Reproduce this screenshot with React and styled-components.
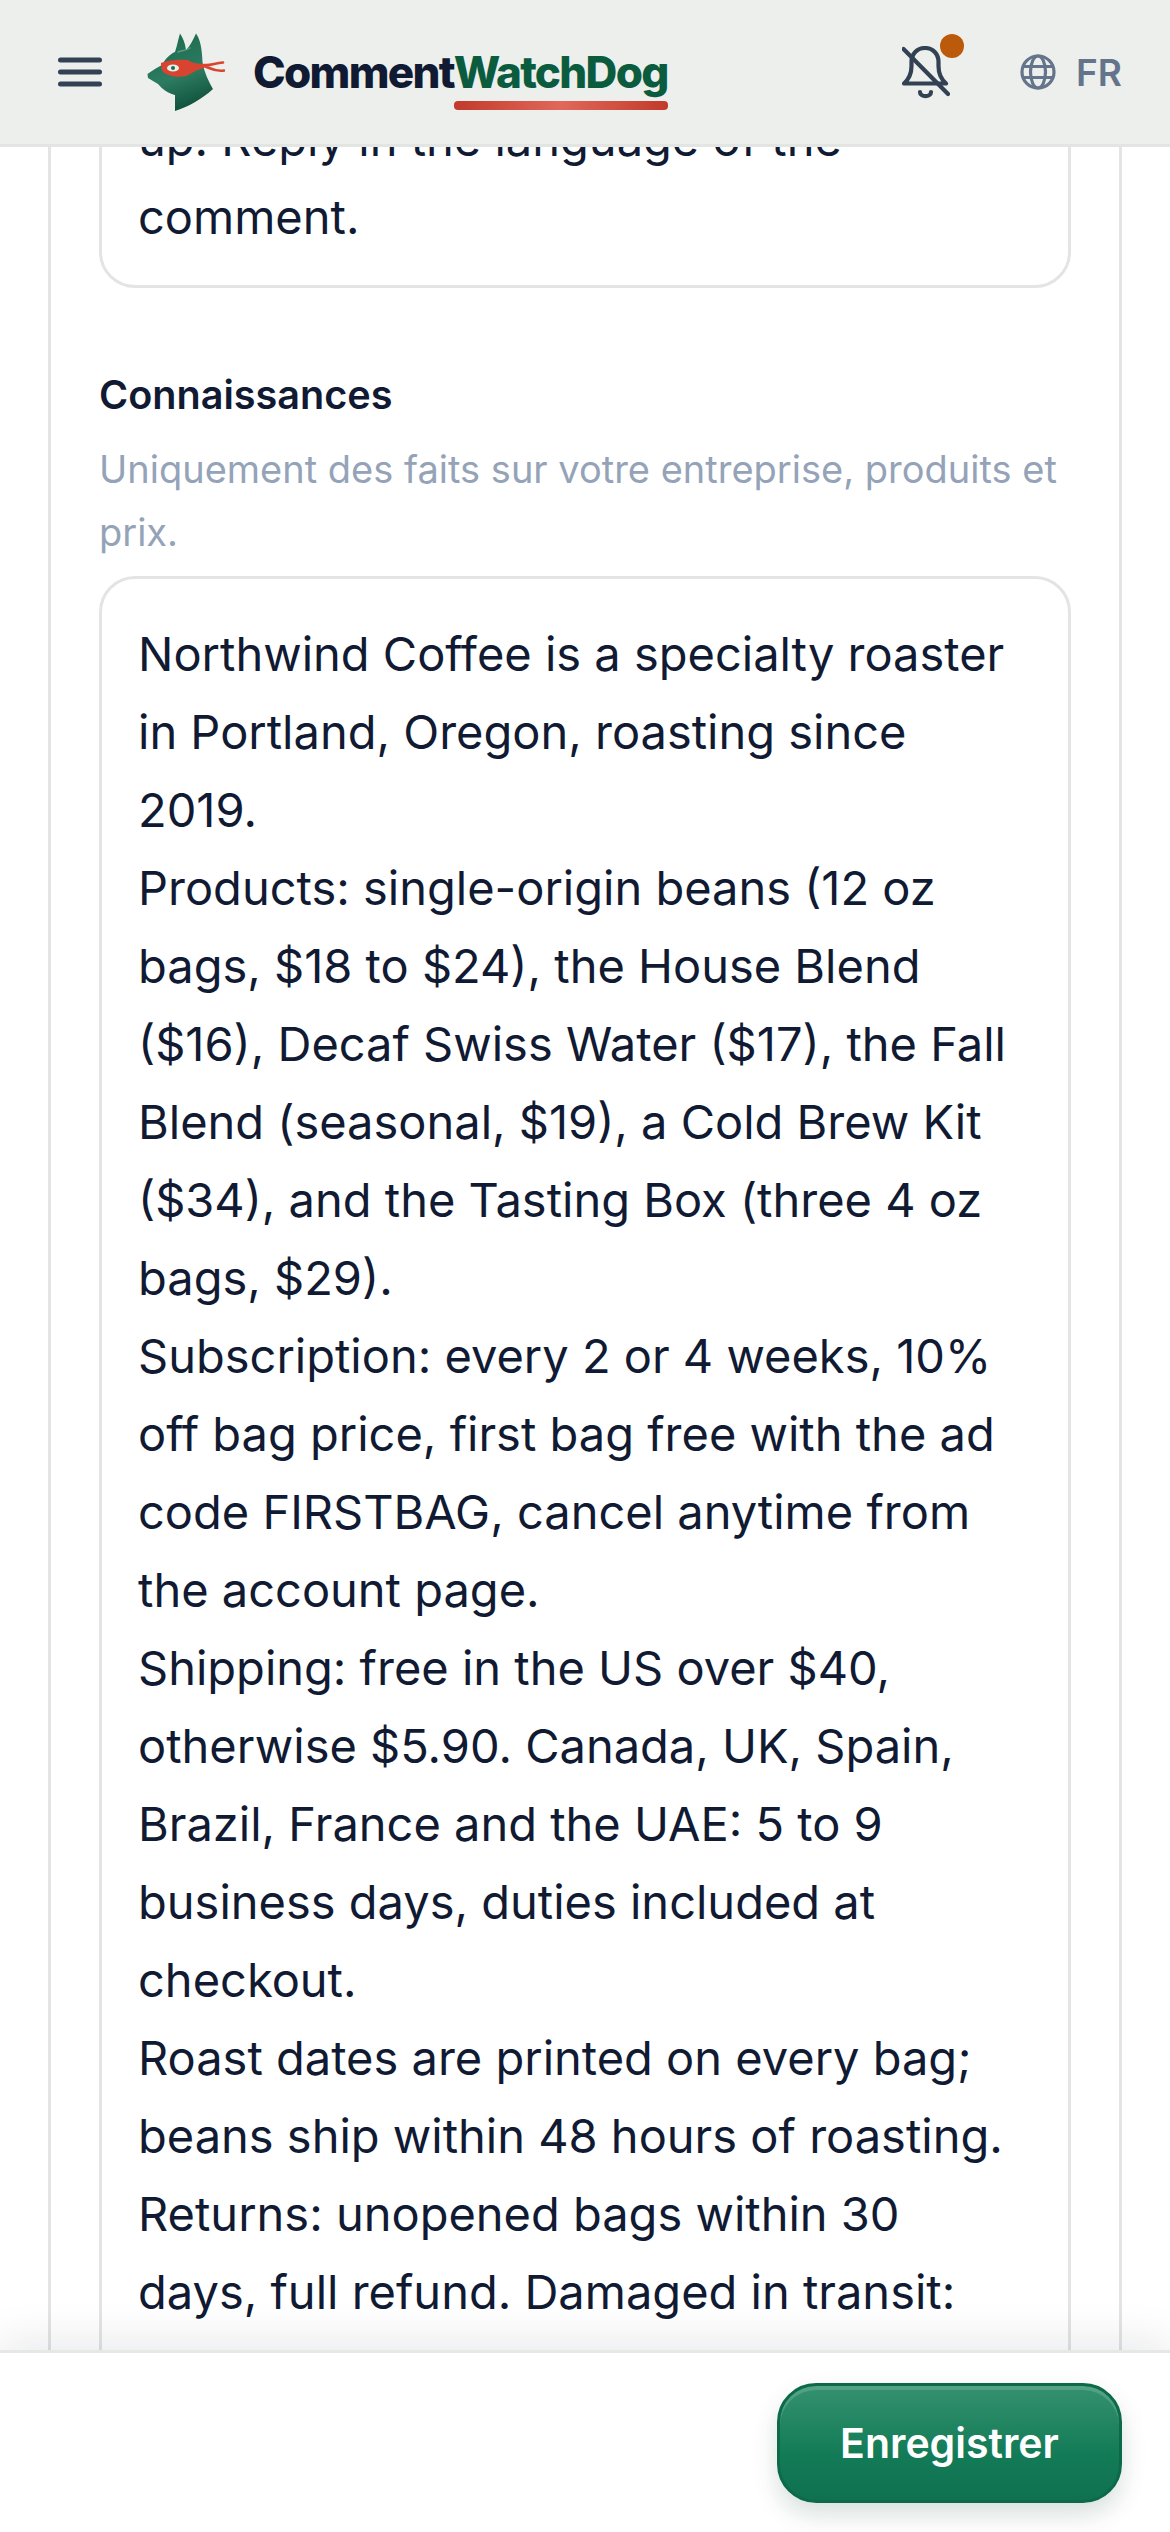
import styled, { createGlobalStyle } from "styled-components";

const knowledge = `Northwind Coffee is a specialty roaster in Portland, Oregon, roasting since 2019.
Products: single-origin beans (12 oz bags, $18 to $24), the House Blend ($16), Decaf Swiss Water ($17), the Fall Blend (seasonal, $19), a Cold Brew Kit ($34), and the Tasting Box (three 4 oz bags, $29).
Subscription: every 2 or 4 weeks, 10% off bag price, first bag free with the ad code FIRSTBAG, cancel anytime from the account page.
Shipping: free in the US over $40, otherwise $5.90. Canada, UK, Spain, Brazil, France and the UAE: 5 to 9 business days, duties included at checkout.
Roast dates are printed on every bag; beans ship within 48 hours of roasting.
Returns: unopened bags within 30 days, full refund. Damaged in transit:`;

function MenuIcon() {
  return (
    <svg width="44" height="30" viewBox="0 0 44 30" fill="none" stroke="#334155" strokeWidth="5" strokeLinecap="round">
      <path d="M2.5 3H41.5M2.5 15H41.5M2.5 27H41.5" />
    </svg>
  );
}

function DogLogo() {
  return (
    <svg width="78" height="84" viewBox="27 20 78 84">
      <defs>
        <linearGradient id="dogFill" x1="0.3" y1="0" x2="0.6" y2="1">
          <stop offset="0" stopColor="#1d6a50" />
          <stop offset="0.55" stopColor="#2c7c61" />
          <stop offset="1" stopColor="#0f4f3a" />
        </linearGradient>
      </defs>
      <path
        fill="url(#dogFill)"
        d="M55 101 L55 85 C48 83 43 80 38 74 L28 68 L27.5 64 C33 60 38 57 42 55 C46 48 50 44 55 42 C57 36 58 30 60 23.5 C63 28 65 33 66 40 C70 36 73 30 76 23.5 C80 29 82 38 82.5 52 C84 62 89 72 93 79 C82 89 68 97 55 101 Z"
      />
      <path fill="none" stroke="#7fb5a0" strokeWidth="1.4" strokeLinecap="round" opacity="0.6" d="M58 42 C62 40 66 41 70 38" />
      <path fill="#d8442f" d="M41 53 C48 50 60 49 68 50 C72 53 78 54 84 54 L84 58 C76 60 72 63 66 66 C58 68 48 66 43 62 C41 58 41 56 41 53 Z" />
      <ellipse cx="53" cy="58" rx="6" ry="3.6" fill="#e8f2ec" />
      <circle cx="53" cy="58" r="2" fill="#1d6a50" />
      <path fill="none" stroke="#d8442f" strokeWidth="2.6" strokeLinecap="round" d="M84 55 C90 56 95 53 103 52.5 M84 56 C90 58 95 62 104 60.5" />
    </svg>
  );
}

function BellSlash() {
  return (
    <svg width="48" height="54" viewBox="0 0 48 54" fill="none" stroke="#334155" strokeWidth="4.2" strokeLinecap="round" strokeLinejoin="round">
      <path d="M2 37.5 C7 33 9.5 27 9.5 20 V16 C9.5 8 15 2 23 2 C31 2 36.5 8 36.5 16 V20 C36.5 27 39 33 44 37.5 Z" />
      <path d="M1.5 3 L46 48" />
      <path d="M18 46 C18 51.5 29 51.5 29 46" />
    </svg>
  );
}

function Globe() {
  return (
    <svg width="36" height="36" viewBox="0 0 36 36" fill="none" stroke="#64748b" strokeWidth="3.2">
      <circle cx="18" cy="18" r="16" />
      <ellipse cx="18" cy="18" rx="7.5" ry="16" />
      <path d="M3.5 12.5H32.5M3.5 23.5H32.5" />
    </svg>
  );
}

export default function App() {
  return (
    <>
      <GlobalStyle />
      <Page>
        <Header>
          <Brand>
            <MenuIcon />
            <LogoMark>
              <DogLogo />
            </LogoMark>
            <Wordmark>
              Comment
              <WatchWord>WatchDog</WatchWord>
            </Wordmark>
          </Brand>
          <Actions>
            <BellButton>
              <BellSlash />
              <Badge />
            </BellButton>
            <Lang>
              <Globe />
              <LangCode>FR</LangCode>
            </Lang>
          </Actions>
        </Header>

        <Main>
          <Card>
            <PromptBox>up. Reply in the language of the comment.</PromptBox>
            <Label>Connaissances</Label>
            <Hint>Uniquement des faits sur votre entreprise, produits et prix.</Hint>
            <KnowledgeBox>{knowledge}</KnowledgeBox>
          </Card>
        </Main>

        <Footer>
          <SaveButton>Enregistrer</SaveButton>
        </Footer>
      </Page>
    </>
  );
}

const GlobalStyle = createGlobalStyle`
  * {
    box-sizing: border-box;
  }

  body {
    margin: 0;
    background: #fff;
    font-family: "Inter", "Liberation Sans", sans-serif;
    color: #111a33;
  }
`;

const Page = styled.div`
  height: 2532px;
  display: flex;
  flex-direction: column;
  overflow: hidden;
`;

const Header = styled.header`
  position: relative;
  z-index: 1;
  flex: none;
  height: 147px;
  padding: 0 48px 0 58px;
  display: flex;
  align-items: center;
  justify-content: space-between;
  background: #ecefeb;
  border-bottom: 3px solid #e3e5e2;
`;

const Brand = styled.div`
  display: flex;
  align-items: center;
`;

const LogoMark = styled.div`
  display: flex;
  margin: 0 28px 0 45px;
`;

const Wordmark = styled.div`
  position: relative;
  font-size: 44px;
  font-weight: 800;
  letter-spacing: -1.7px;
  line-height: 54px;
  color: #111a33;
`;

const WatchWord = styled.span`
  position: relative;
  color: #0b5c3f;

  &::after {
    content: "";
    position: absolute;
    left: 0;
    right: 0;
    bottom: -11px;
    height: 9px;
    border-radius: 4px;
    background: linear-gradient(90deg, #c23a2b, #e0685a 50%, #c23a2b);
  }
`;

const Actions = styled.div`
  display: flex;
  align-items: center;
  gap: 70px;
`;

const BellButton = styled.div`
  position: relative;
  display: flex;
  margin-top: 2px;
`;

const Badge = styled.span`
  position: absolute;
  top: -12px;
  right: -14px;
  width: 24px;
  height: 24px;
  border-radius: 50%;
  background: #bc5a0c;
`;

const Lang = styled.div`
  display: flex;
  align-items: center;
  gap: 20px;
`;

const LangCode = styled.span`
  font-size: 37px;
  font-weight: 600;
  color: #64748b;
`;

const Main = styled.main`
  flex: 1;
  min-height: 0;
  overflow: hidden;
`;

const Card = styled.section`
  margin: -89px 48px 0;
  padding: 0 48px;
  background: #fff;
  border: 3px solid #e3e5e2;
`;

const TextBox = styled.div`
  border: 3px solid #e3e5e2;
  border-radius: 36px;
  padding: 36px 50px 29px 36px;
  font-size: 47px;
  line-height: 78px;
  color: #111a33;
  white-space: pre-line;
`;

const PromptBox = styled(TextBox)``;

const KnowledgeBox = styled(TextBox)`
  margin-top: 12px;
  padding-bottom: 160px;
`;

const Label = styled.div`
  margin-top: 82px;
  font-size: 39.6px;
  font-weight: 600;
  line-height: 50px;
  color: #111a33;
`;

const Hint = styled.p`
  margin: 18px 0 0;
  font-size: 38px;
  line-height: 63px;
  color: #94a3b8;
`;

const Footer = styled.footer`
  position: relative;
  flex: none;
  height: 182px;
  padding: 30px 48px 0;
  display: flex;
  justify-content: flex-end;
  align-items: flex-start;
  background: #fff;
  border-top: 3px solid #e6e8e6;
  box-shadow: 0 -10px 40px rgba(15, 23, 42, 0.09);
`;

const SaveButton = styled.button`
  width: 345px;
  height: 120px;
  border: 3px solid #0d6a49;
  border-radius: 39px;
  background: linear-gradient(to bottom, #35916f, #137b57 60%, #0f7150);
  box-shadow: inset 0 4px 0 rgba(255, 255, 255, 0.16), 0 12px 24px rgba(15, 60, 45, 0.16);
  font-family: inherit;
  font-size: 41px;
  font-weight: 600;
  color: #fff;
`;
